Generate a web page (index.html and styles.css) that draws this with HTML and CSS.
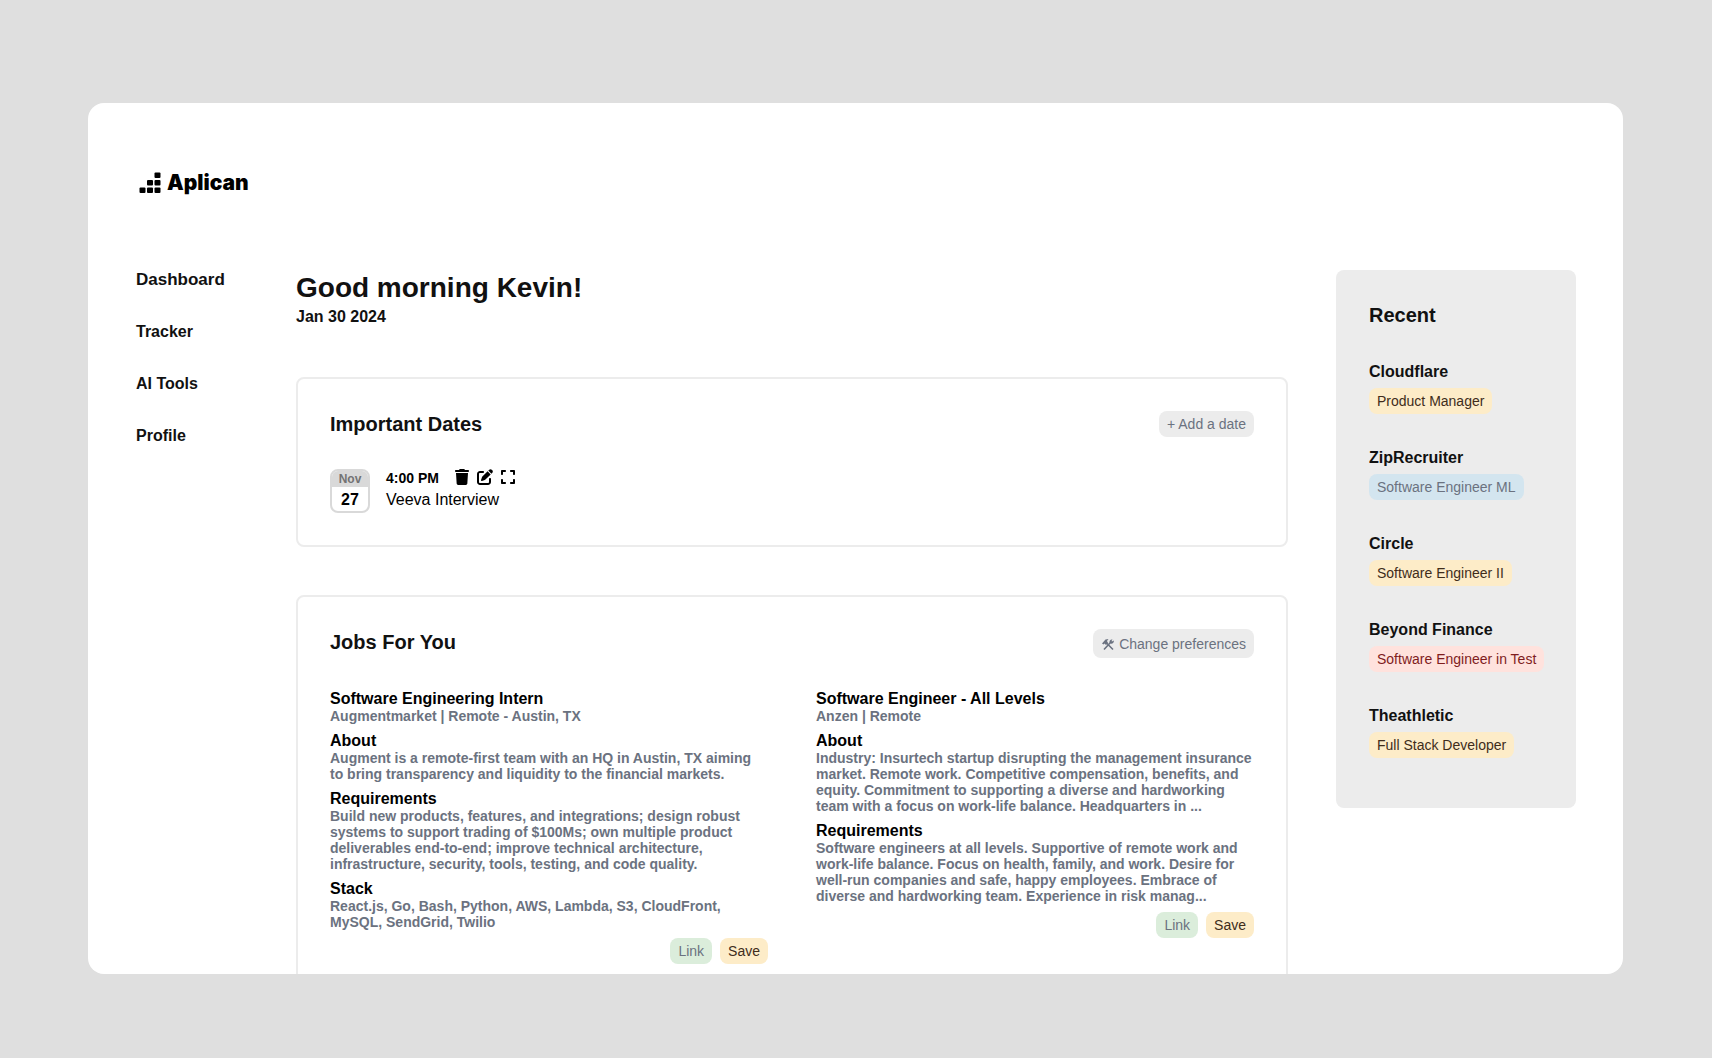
FILE: index.html
```html
<!DOCTYPE html>
<html lang="en">
<head>
  <meta charset="utf-8">
  <meta name="viewport" content="width=device-width, initial-scale=1">
  <title>Aplican</title>
  <link rel="stylesheet" href="styles.css">
</head>
<body>
  <div class="app">
    <header class="topbar">
      <a class="logo" href="#">
        <svg class="logo-mark" viewBox="0 0 22 22" aria-hidden="true">
          <rect x="15.5" y="0.5" width="6" height="5.5" rx="1"/>
          <rect x="8" y="8" width="6" height="5.5" rx="1"/>
          <rect x="15.5" y="8" width="6" height="5.5" rx="1"/>
          <rect x="0.5" y="15.5" width="6" height="5.5" rx="1"/>
          <rect x="8" y="15.5" width="6" height="5.5" rx="1"/>
          <rect x="15.5" y="15.5" width="6" height="5.5" rx="1"/>
        </svg>
        <span>Aplican</span>
      </a>
    </header>

    <div class="layout">
      <nav class="nav">
        <a class="nav-link nav-link-active" href="#">Dashboard</a>
        <a class="nav-link" href="#">Tracker</a>
        <a class="nav-link" href="#">AI Tools</a>
        <a class="nav-link" href="#">Profile</a>
      </nav>

      <main class="main">
        <div class="greeting">
          <h1>Good morning Kevin!</h1>
          <p>Jan 30 2024</p>
        </div>

        <section class="card">
          <div class="card-head">
            <h2>Important Dates</h2>
            <button class="pill pill-gray" type="button">+ Add a date</button>
          </div>
          <div class="event">
            <div class="day">
              <span class="day-month">Nov</span>
              <span class="day-number">27</span>
            </div>
            <div class="event-body">
              <div class="event-line">
                <span class="event-time">4:00 PM</span>
                <div class="event-actions">
                  <button class="icon-button" type="button" aria-label="Delete">
                    <svg width="14" height="16" viewBox="0 0 448 512"><path d="M135.2 17.7L128 32H32C14.300 32 0 46.300 0 64S14.300 96 32 96H416c17.700 0 32-14.300 32-32s-14.300-32-32-32H320l-7.200-14.300C307.400 6.800 296.300 0 284.200 0H163.800c-12.100 0-23.200 6.800-28.600 17.700zM416 128H32L53.200 467c1.600 25.300 22.600 45 47.900 45H346.900c25.300 0 46.300-19.700 47.900-45L416 128z"/></svg>
                  </button>
                  <button class="icon-button" type="button" aria-label="Edit">
                    <svg width="16" height="16" viewBox="0 0 512 512"><path d="M471.600 21.700c-21.900-21.900-57.300-21.900-79.200 0L362.300 51.700l97.900 97.900 30.100-30.100c21.900-21.900 21.900-57.300 0-79.200L471.600 21.700zm-299.200 220c-6.100 6.100-10.800 13.600-13.500 21.900l-29.600 88.800c-2.900 8.600-.6 18.100 5.800 24.600s15.900 8.700 24.600 5.800l88.800-29.600c8.200-2.700 15.700-7.400 21.900-13.500L437.700 172.300 339.700 74.300 172.400 241.700zM96 64C43 64 0 107 0 160V416c0 53 43 96 96 96H352c53 0 96-43 96-96V320c0-17.700-14.300-32-32-32s-32 14.300-32 32v96c0 17.700-14.300 32-32 32H96c-17.700 0-32-14.300-32-32V160c0-17.700 14.300-32 32-32h96c17.700 0 32-14.300 32-32s-14.300-32-32-32H96z"/></svg>
                  </button>
                  <button class="icon-button" type="button" aria-label="Expand">
                    <svg width="14" height="16" viewBox="0 0 448 512"><path d="M32 32C14.300 32 0 46.300 0 64v96c0 17.700 14.300 32 32 32s32-14.300 32-32V96h64c17.700 0 32-14.300 32-32s-14.300-32-32-32H32zM64 352c0-17.700-14.300-32-32-32s-32 14.300-32 32v96c0 17.700 14.300 32 32 32h96c17.700 0 32-14.300 32-32s-14.300-32-32-32H64V352zM320 32c-17.700 0-32 14.300-32 32s14.300 32 32 32h64v64c0 17.700 14.300 32 32 32s32-14.300 32-32V64c0-17.700-14.300-32-32-32H320zM448 352c0-17.700-14.300-32-32-32s-32 14.300-32 32v64H320c-17.700 0-32 14.300-32 32s14.300 32 32 32h96c17.700 0 32-14.300 32-32V352z"/></svg>
                  </button>
                </div>
              </div>
              <p class="event-name">Veeva Interview</p>
            </div>
          </div>
        </section>

        <section class="card">
          <div class="card-head">
            <h2>Jobs For You</h2>
            <button class="pill pill-gray pill-tall" type="button">
              <svg class="tools-icon" viewBox="0 0 14 14" aria-hidden="true">
                <path class="tools-handle" d="M5 5.500L12 12.500M9.500 5.500L3 12.500"/>
                <path d="M1 6.500L4.500 2.500L7.500 2L6 4L7 6L5 8L3.500 6.500L2.500 7.500Z"/>
                <path d="M11.500 2.500L10.500 4L11 4.500L12.800 3.500C13.300 5.500 11.500 7 9.600 6.600L8.600 5.600C8 3.700 9.700 2 11.500 2.500Z"/>
              </svg>
              <span>Change preferences</span>
            </button>
          </div>
          <div class="jobs">
            <article class="job">
              <div>
                <h3>Software Engineering Intern</h3>
                <p>Augmentmarket | Remote - Austin, TX</p>
              </div>
              <div>
                <h3>About</h3>
                <p>Augment is a remote-first team with an HQ in Austin, TX aiming to bring transparency and liquidity to the financial markets.</p>
              </div>
              <div>
                <h3>Requirements</h3>
                <p>Build new products, features, and integrations; design robust systems to support trading of $100Ms; own multiple product deliverables end-to-end; improve technical architecture, infrastructure, security, tools, testing, and code quality.</p>
              </div>
              <div>
                <h3>Stack</h3>
                <p>React.js, Go, Bash, Python, AWS, Lambda, S3, CloudFront, MySQL, SendGrid, Twilio</p>
              </div>
              <div class="job-actions">
                <a class="pill pill-green" href="#">Link</a>
                <button class="pill pill-yellow" type="button">Save</button>
              </div>
            </article>
            <article class="job">
              <div>
                <h3>Software Engineer - All Levels</h3>
                <p>Anzen | Remote</p>
              </div>
              <div>
                <h3>About</h3>
                <p>Industry: Insurtech startup disrupting the management insurance market. Remote work. Competitive compensation, benefits, and equity. Commitment to supporting a diverse and hardworking team with a focus on work-life balance. Headquarters in ...</p>
              </div>
              <div>
                <h3>Requirements</h3>
                <p>Software engineers at all levels. Supportive of remote work and work-life balance. Focus on health, family, and work. Desire for well-run companies and safe, happy employees. Embrace of diverse and hardworking team. Experience in risk manag...</p>
              </div>
              <div class="job-actions">
                <a class="pill pill-green" href="#">Link</a>
                <button class="pill pill-yellow" type="button">Save</button>
              </div>
            </article>
          </div>
        </section>
      </main>

      <aside class="recent">
        <h2>Recent</h2>
        <div class="recent-item">
          <h3>Cloudflare</h3>
          <span class="pill pill-yellow">Product Manager</span>
        </div>
        <div class="recent-item">
          <h3>ZipRecruiter</h3>
          <span class="pill pill-blue">Software Engineer ML</span>
        </div>
        <div class="recent-item">
          <h3>Circle</h3>
          <span class="pill pill-yellow">Software Engineer II</span>
        </div>
        <div class="recent-item">
          <h3>Beyond Finance</h3>
          <span class="pill pill-red">Software Engineer in Test</span>
        </div>
        <div class="recent-item">
          <h3>Theathletic</h3>
          <span class="pill pill-yellow">Full Stack Developer</span>
        </div>
      </aside>
    </div>
  </div>
</body>
</html>
```
FILE: styles.css
```css
* {
  box-sizing: border-box;
}

body {
  margin: 0;
  height: 100vh;
  padding: 103px 89px 84px 88px;
  overflow: hidden;
  background: #dfdfdf;
  color: #111;
  font-family: "Liberation Sans", Arial, sans-serif;
  font-size: 16px;
  line-height: 18px;
}

h1,
h2,
h3,
p {
  margin: 0;
}

a {
  color: inherit;
  text-decoration: none;
}

button {
  border: 0;
  font: inherit;
  cursor: pointer;
}

.app {
  height: 100%;
  padding: 64px 47px 0 48px;
  overflow: hidden;
  background: #fff;
  border-radius: 16px;
}

.topbar {
  display: flex;
  padding-left: 3px;
  margin-bottom: 72px;
}

.logo {
  display: flex;
  align-items: center;
  gap: 6px;
  height: 31px;
  color: #000;
  font-family: Inter, sans-serif;
  font-size: 21px;
  font-weight: 900;
}

.logo-mark {
  width: 22px;
  height: 22px;
}

.layout {
  display: grid;
  grid-template-columns: 112px minmax(0, 1fr) 240px;
  gap: 48px;
  align-items: start;
}

.nav {
  display: flex;
  flex-direction: column;
  align-items: flex-start;
  gap: 32px;
}

.nav-link {
  font-weight: 700;
  line-height: 20px;
}

.nav-link-active {
  font-size: 17px;
}

.main {
  display: flex;
  flex-direction: column;
  gap: 48px;
}

h1 {
  font-size: 28px;
  line-height: 36px;
}

.greeting p {
  padding-bottom: 2px;
  font-weight: 700;
  line-height: 21px;
}

h2 {
  font-size: 20px;
  line-height: 26px;
}

h3 {
  font-size: 16px;
}

.card {
  padding: 32px;
  border: 2px solid #ececec;
  border-radius: 8px;
}

.card-head {
  display: flex;
  align-items: flex-start;
  justify-content: space-between;
  margin-bottom: 32px;
}

.pill {
  display: inline-block;
  padding: 5px 8px;
  border-radius: 8px;
  font-size: 14px;
  line-height: 16px;
  white-space: nowrap;
}

.pill-gray {
  background: #ececec;
  color: #6b7280;
}

.pill-yellow {
  background: #fdecc8;
  color: #402c1b;
}

.pill-blue {
  background: #d3e5ef;
  color: #6b7280;
}

.pill-red {
  background: #ffe2dd;
  color: #7f1d1d;
}

.pill-green {
  background: #dbeddb;
  color: #6b7280;
}

.pill-tall {
  display: flex;
  align-items: center;
  gap: 4px;
  height: 29px;
}

.tools-icon {
  width: 14px;
  height: 14px;
  fill: currentColor;
}

.tools-handle {
  stroke: currentColor;
  stroke-width: 1.6;
}

.event {
  display: flex;
  gap: 16px;
}

.day {
  width: 40px;
  height: 44px;
  border: 2px solid #d9d9d9;
  border-radius: 8px;
  overflow: hidden;
  display: flex;
  flex-direction: column;
  text-align: center;
  font-weight: 700;
}

.day-month {
  background: #d9d9d9;
  color: #737373;
  font-size: 12px;
  line-height: 16px;
}

.day-number {
  color: #000;
  line-height: 26px;
}

.event-body {
  color: #000;
}

.event-line {
  display: flex;
  gap: 16px;
  height: 18px;
}

.event-time {
  font-size: 14px;
  font-weight: 700;
}

.event-actions {
  display: flex;
  align-items: flex-start;
  gap: 8px;
}

.icon-button {
  display: flex;
  padding: 0;
  background: none;
  color: #000;
}

.event-name {
  line-height: 26px;
}

.jobs {
  display: grid;
  grid-template-columns: repeat(2, minmax(0, 1fr));
  gap: 48px;
  align-items: start;
}

.job {
  display: flex;
  flex-direction: column;
  gap: 8px;
}

.job h3 {
  color: #000;
}

.job p {
  color: #6b7280;
  font-size: 14px;
  font-weight: 700;
  line-height: 16px;
}

.job-actions {
  display: flex;
  justify-content: flex-end;
  gap: 8px;
}

.recent {
  display: flex;
  flex-direction: column;
  gap: 35px;
  padding: 34px 32px 50px 33px;
  background: #ececec;
  border-radius: 8px;
}

.recent h2 {
  margin-bottom: 2px;
  line-height: 22px;
}

.recent-item {
  display: flex;
  flex-direction: column;
  align-items: flex-start;
  gap: 7px;
}
```
